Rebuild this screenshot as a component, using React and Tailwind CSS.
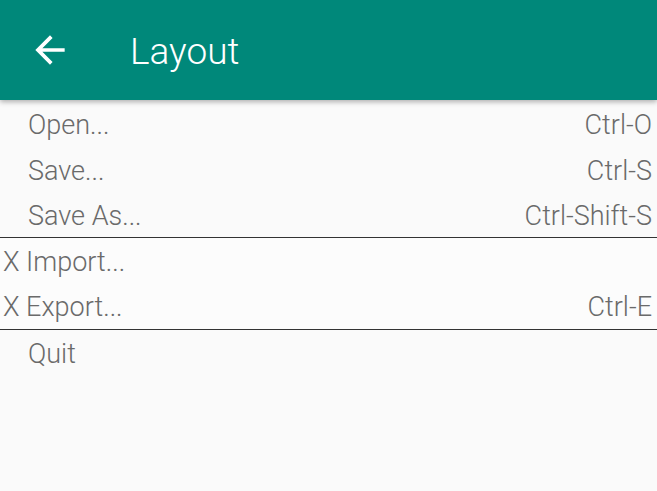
const ArrowBack = () => (
  <svg width="44" height="44" viewBox="0 0 24 24" fill="white">
    <path d="M20 11H7.83l5.59-5.59L12 4l-8 8 8 8 1.41-1.41L7.83 13H20v-2z" />
  </svg>
)

const Item = ({ label, shortcut, inset = true, h = 'h-[46px]' }) => (
  <div className={`flex items-center justify-between pr-[5px] pt-[2px] ${h} ${inset ? 'pl-[28px]' : 'pl-[3px]'}`}>
    <span>{label}</span>
    {shortcut && <span>{shortcut}</span>}
  </div>
)

export default function App() {
  return (
    <div
      className="w-[657px] h-[491px] bg-[#fafafa] overflow-hidden font-light"
      style={{ fontFamily: 'Roboto, "Liberation Sans", sans-serif' }}
    >
      {/* Toolbar */}
      <div className="relative z-10 h-[100px] bg-[#00887a] flex items-center shadow-[0_2px_5px_rgba(0,0,0,0.3)]">
        <div className="ml-[28px] w-[44px] h-[44px] flex items-center justify-center">
          <ArrowBack />
        </div>
        <div className="ml-[58px] text-white text-[37px] pt-[3px]">Layout</div>
      </div>

      {/* Menu */}
      <div className="text-[#6a6a6a] text-[27px] leading-none pt-px">
        <Item label="Open..." shortcut="Ctrl-O" />
        <Item label="Save..." shortcut="Ctrl-S" />
        <Item label="Save As..." shortcut="Ctrl-Shift-S" h="h-[44px]" />
        <div className="h-px bg-[#333333]" />
        <div className="bg-[#fcfcfc]">
          <Item label="X Import..." inset={false} />
          <Item label="X Export..." shortcut="Ctrl-E" inset={false} h="h-[45px]" />
        </div>
        <div className="h-px bg-[#333333]" />
        <Item label="Quit" />
      </div>
    </div>
  )
}
